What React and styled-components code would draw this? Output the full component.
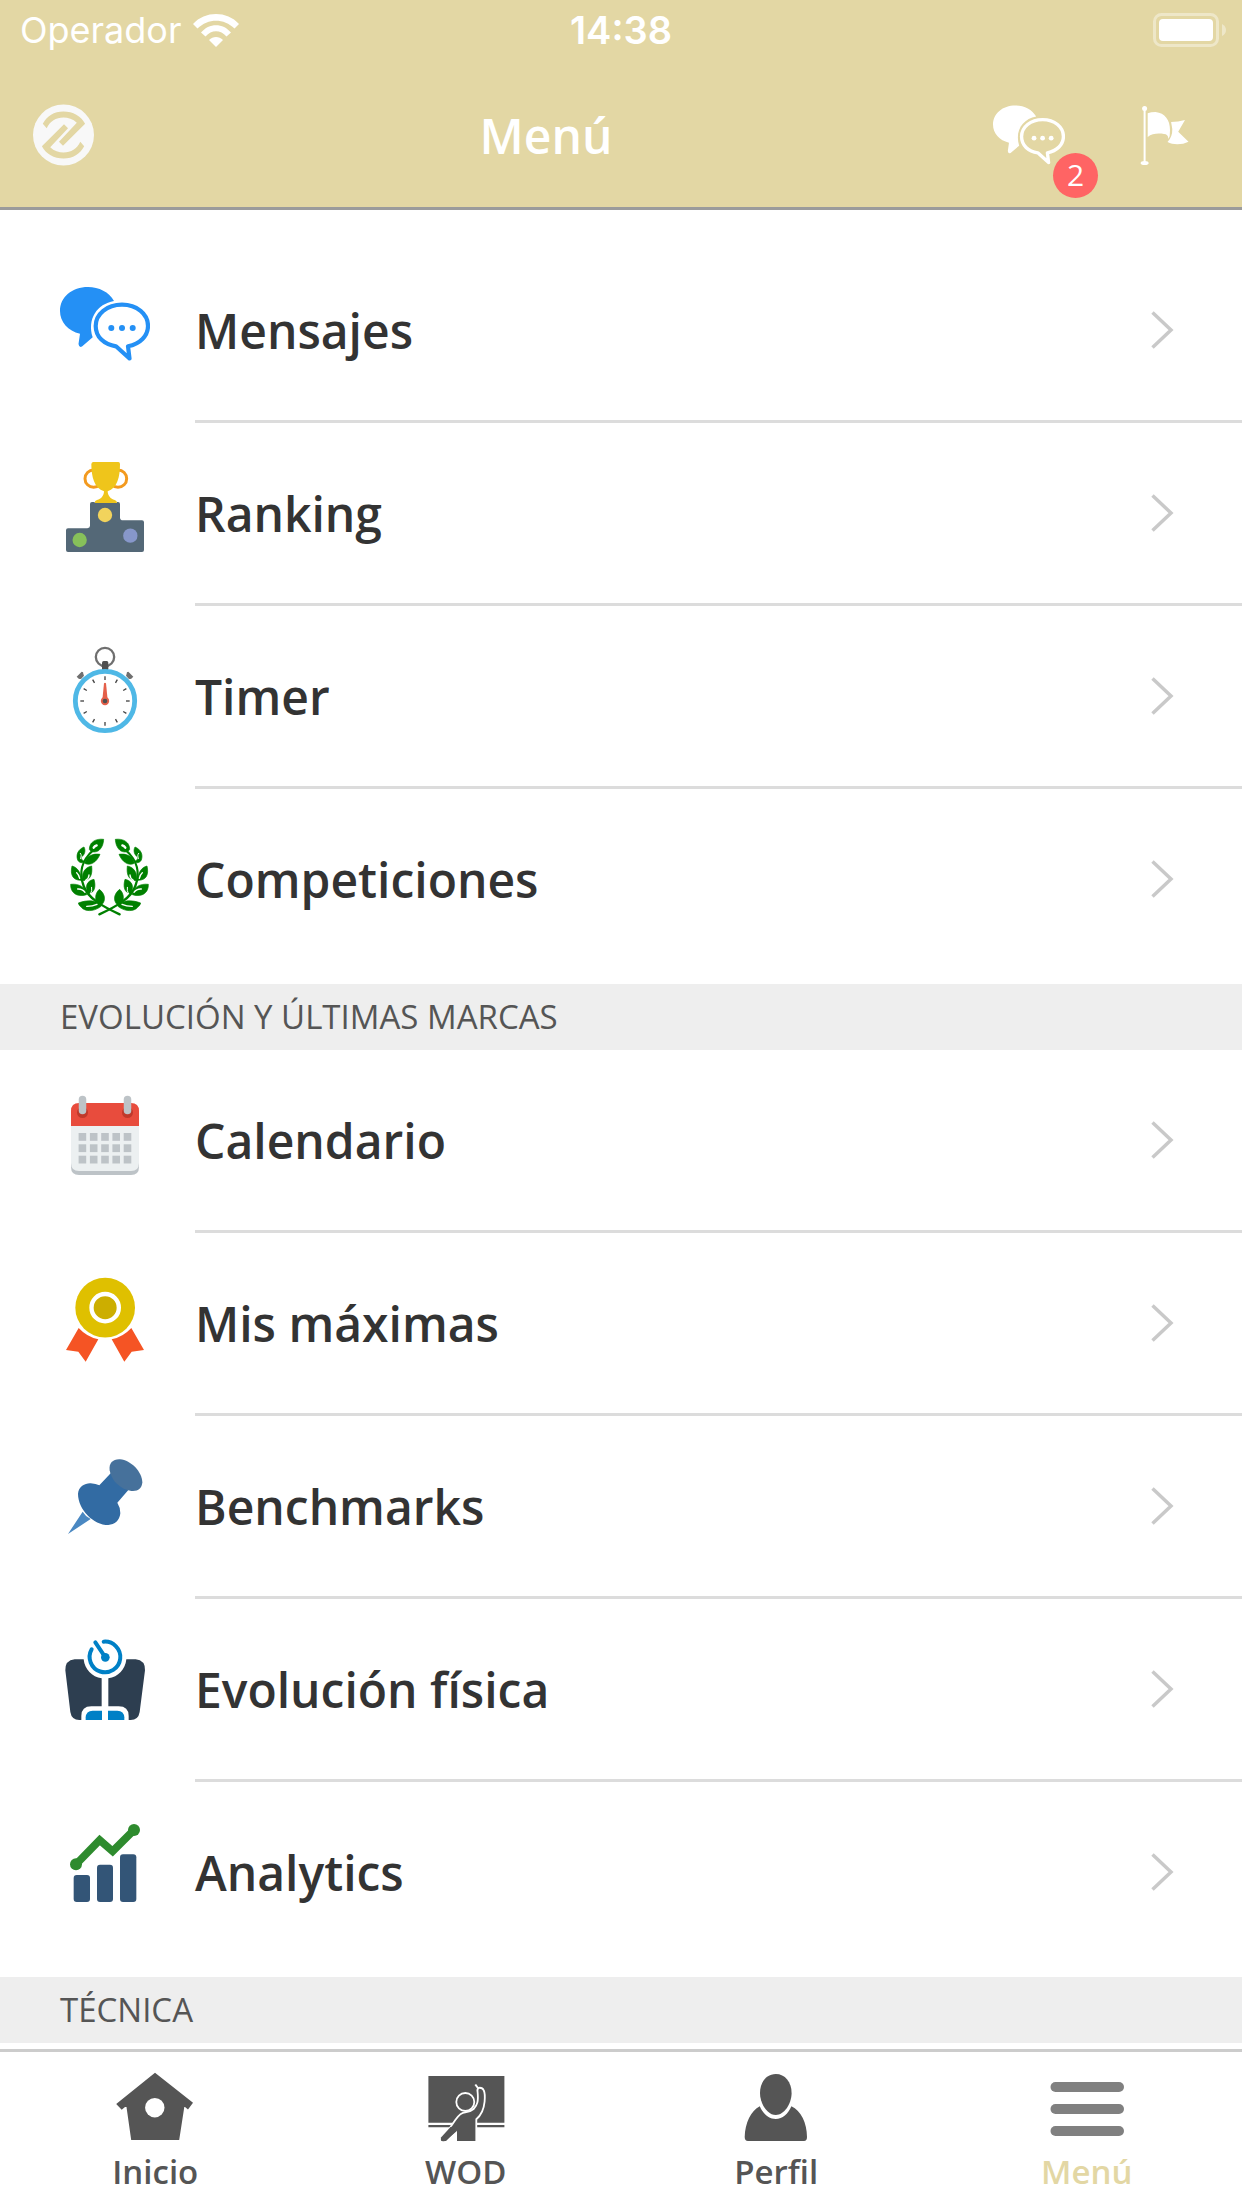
import React from 'react';
import styled, { createGlobalStyle } from 'styled-components';

const GlobalStyle = createGlobalStyle`
  * {
    box-sizing: border-box;
  }

  body {
    margin: 0;
    background: #fff;
    color: #333;
    font-family: "Open Sans", "Noto Sans", sans-serif;
  }
`;

/* ---------- icons ---------- */

const WifiIcon = () => (
  <svg width="46" height="33" viewBox="0 0 46 33" fill="#fff" aria-hidden="true">
    <path d="M0 10C12-3.300 34-3.300 46 10L41.500 14.500C31 4 15 4 4.500 14.500Z" />
    <path d="M8 18.500C16 8.700 30 8.700 38 18.500L33.500 22.500C27.500 15.500 18.500 15.500 12.500 22.500Z" />
    <path d="M16 26C20 22 26 22 30 26L23 33Z" />
  </svg>
);

const BatteryIcon = () => (
  <svg width="74" height="34" viewBox="0 0 74 34" aria-hidden="true">
    <rect x="1.500" y="1.500" width="63" height="31" rx="7" fill="none" stroke="#fff" strokeOpacity="0.4" strokeWidth="3" />
    <rect x="6" y="6" width="54" height="22" rx="4" fill="#fff" />
    <path d="M69 11q4 2 4 6t-4 6z" fill="#fff" fillOpacity="0.4" />
  </svg>
);

const LOGO_HOOK =
  'M9.800 19.800C14 12 21 7.500 30.400 7.500C40 7.500 48 12 52.100 19.800L30 41.800L26 37.800L43.800 18.800C40 15 35 13.500 30.400 13.500C23 13.500 17 17 13.700 24.200Z';

const LogoIcon = () => (
  <svg width="61" height="62" viewBox="0 0 61 62" aria-hidden="true">
    <circle cx="30.500" cy="31" r="30.500" fill="#f8f8f8" />
    <g fill="#e3d7a4">
      <path d={LOGO_HOOK} />
      <path d={LOGO_HOOK} transform="rotate(180 30.500 31)" />
    </g>
  </svg>
);

const ChatIcon = ({ size = 90, color = '#2490f5' }) => (
  <svg width={size} height={size} viewBox="0 0 90 90" fill={color} aria-hidden="true">
    <path d="M54 22C49 13 39 8 28 8C12 8 0 18 0 32C0 43 8 52 20 54.700L18.500 65Q19 69 22 67.500L32.700 58.300C27 40 37 25 54 22Z" />
    <path
      d="M56 67.300C44 65.500 35.700 58 35.700 47C35.700 35 47 25.700 62 25.700S88 35 88 47C88 57 80 65 68 67.300L69.500 79.500Z"
      fill="none"
      stroke={color}
      strokeWidth="4.200"
      strokeLinejoin="round"
    />
    <circle cx="51.300" cy="49" r="3" />
    <circle cx="62" cy="49" r="3" />
    <circle cx="72.700" cy="49" r="3" />
  </svg>
);

const FlagIcon = () => (
  <svg width="60" height="72" viewBox="0 0 60 72" fill="#fff" aria-hidden="true">
    <circle cx="10.600" cy="9.500" r="2.500" />
    <path d="M9.600 10h2v53h-2z" />
    <ellipse cx="10.600" cy="64" rx="4" ry="2" />
    <path d="M13.700 14.300Q17 13 21.600 13C31 14 36 21 36 31L35.700 37L34.500 40Q34 35 30 35C24 34 18 34.500 13.700 38Z" />
    <path d="M37.100 23Q44 23 51 21L44.200 32.700L54.500 42.700C48 46 39 46 33.500 43Q38.500 38 38.300 30Z" />
  </svg>
);

const PodiumIcon = () => (
  <svg width="90" height="90" viewBox="60 606 270 270" aria-hidden="true">
    <g fill="none" stroke="#f39a1f" strokeWidth="9">
      <circle cx="161" cy="656" r="26" />
      <circle cx="234" cy="656" r="26" />
    </g>
    <path d="M167 630L227 630L216 686L178 686Z" fill="#fff" />
    <path
      d="M160 606H235Q240 606 240 612C240 650 232 685 203 694C203 706 212 718 224 720Q231 722 231 729H164Q164 722 171 720C184 718 192 706 192 694C163 685 154 650 154 612Q155 606 160 606Z"
      fill="#efc51b"
    />
    <path
      d="M150 732Q150 726 156 726H164V729H231V726H234Q240 726 240 732V773Q241 781 249 781H306Q312 781 312 787V870Q312 876 306 876H84Q78 876 78 870V811Q78 805 84 805H142Q150 804 150 797Z"
      fill="#546877"
    />
    <circle cx="195" cy="765" r="21.500" fill="#f2d35c" />
    <circle cx="119" cy="840" r="21.500" fill="#87c05a" />
    <circle cx="271" cy="827" r="21.500" fill="#8797ca" />
  </svg>
);

const TimerIcon = () => (
  <svg width="90" height="90" viewBox="60 75 270 270" aria-hidden="true">
    <circle cx="195" cy="111" r="27.500" fill="none" stroke="#6f6f6f" strokeWidth="7" />
    <rect x="186" y="123" width="19" height="28" rx="5" fill="#4f4f4f" />
    <g fill="#6f6f6f">
      <path d="M110 170L125 155Q131 155 130 161L132 167L124 176Q116 178 114 174Z" />
      <path d="M280 170L265 155Q259 155 260 161L258 167L266 176Q274 178 276 174Z" />
    </g>
    <circle cx="195" cy="243" r="89" fill="#fff" stroke="#4fb8e6" strokeWidth="14.500" />
    <g stroke="#444" strokeWidth="4">
      {[0, 30, 60, 90, 120, 150, 180, 210, 240, 270, 300, 330].map((angle) => (
        <path key={angle} d="M195 169V180" transform={`rotate(${angle} 195 243)`} />
      ))}
    </g>
    <path d="M192 190Q195 186 198 190L203 240H187Z" fill="#e4604a" />
    <circle cx="195" cy="243" r="12.500" fill="#e4604a" />
    <circle cx="195" cy="243" r="7" fill="#4f4f4f" />
  </svg>
);

const LaurelBranch = ({ transform }) => (
  <g transform={transform}>
    <g fill="#008000" stroke="#008000" strokeWidth="2" strokeLinejoin="round">
      <path d="M191 658C168 655 148 666 148 688C152 698 168 698 177 691C188 681 190 669 191 658Z" />
      <path d="M132 681C115 688 107 703 113 720C118 730 129 730 134 724C127 722 122 717 124 711C134 705 138 692 132 681Z" />
      <path d="M180 703C160 700 140 706 134 730C152 739 171 725 180 703Z" />
      <path d="M96 738C90 764 98 781 123 781C124 760 113 742 96 738Z" />
      <path d="M155 738C134 742 124 760 128 782C151 781 158 765 155 738Z" />
      <path d="M92 793C91 818 110 833 140 824C137 801 116 790 92 793Z" />
      <path d="M162 778C141 782 133 800 145 821C165 818 168 799 162 778Z" />
      <path d="M115 849C118 860 124 860 128 866C145 877 168 871 183 859C172 839 141 839 115 849Z" />
      <path d="M178 808C164 821 162 843 179 859C198 848 199 824 178 808Z" />
    </g>
    <g fill="none" strokeLinecap="round">
      <path d="M160 690C125 722 115 755 131 798C143 833 184 858 239 883" stroke="#008000" strokeWidth="7" />
      <path d="M161 683Q164 678 170 676" stroke="#fff" strokeWidth="7" />
      <path d="M122 716C124 707 125 706 121 700" stroke="#fff" strokeWidth="3" />
      <path d="M110 758Q117 764 119 775" stroke="#fff" strokeWidth="4" />
      <path d="M137 781Q147 775 147 765" stroke="#fff" strokeWidth="4" />
      <path d="M113 807Q127 806 135 817" stroke="#fff" strokeWidth="4" />
      <path d="M152 821Q157 812 155 802" stroke="#fff" strokeWidth="3" />
      <path d="M140 859Q158 859 171 853" stroke="#fff" strokeWidth="4" />
    </g>
  </g>
);

const LaurelIcon = () => (
  <svg width="90" height="90" viewBox="60 624 270 270" aria-hidden="true">
    <LaurelBranch />
    <LaurelBranch transform="translate(417 0) scale(-1 1)" />
  </svg>
);

const CalendarIcon = () => (
  <svg width="90" height="90" viewBox="0 0 90 90" aria-hidden="true">
    <path d="M11 70H79V78Q79 86 71 86H19Q11 86 11 78Z" fill="#bdc3c7" />
    <path d="M11 36H79V74Q79 82 71 82H19Q11 82 11 74Z" fill="#ecf0f1" />
    <path d="M11 37V22Q11 14 19 14H71Q79 14 79 22V37Z" fill="#e84c3d" />
    {[22.5, 67.5].map((x) => (
      <g key={x}>
        <circle cx={x} cy="23.500" r="5.500" fill="#c0392b" />
        <rect x={x - 3.75} y="6.700" width="7.500" height="18.600" rx="3.750" fill="#bdc3c7" />
      </g>
    ))}
    {[44, 55.3, 66.7].map((y) =>
      [18.6, 29.9, 41.2, 52.4, 63.7].map((x) => (
        <rect key={`${x}-${y}`} x={x} y={y} width="7.600" height="7.800" fill="#bdc3c7" />
      ))
    )}
  </svg>
);

const MedalIcon = () => (
  <svg width="90" height="90" viewBox="60 66 270 270" aria-hidden="true">
    <path d="M116 234Q141 261 175 268L137 335L115 305L78 300Z" fill="#f55424" />
    <path d="M274 234Q249 261 215 268L253 335L275 305L312 300Z" fill="#f55424" />
    <circle cx="195.500" cy="173" r="89.500" fill="#dfc000" />
    <circle cx="195.500" cy="173" r="41" fill="#ccae00" stroke="#fff" strokeWidth="13" />
  </svg>
);

const PinIcon = () => (
  <svg width="90" height="90" viewBox="60 615 270 270" aria-hidden="true">
    <path d="M128 785Q136 799 152 807L84 852Z" fill="#4a88c2" />
    <path
      d="M114 731C116 709 136 699 152 700Q168 701 178 706L212 670L265 720L232 758Q242 774 241 790C239 812 224 824 205 825C160 825 114 778 114 731Z"
      fill="#326ba3"
    />
    <path d="M209 661C206 639 219 627 240 628C273 631 306 665 307 697C306 716 293 725 274 723C242 719 214 693 209 661Z" fill="#46719b" />
  </svg>
);

const ScaleIcon = () => (
  <svg width="90" height="90" viewBox="60 84 270 270" aria-hidden="true">
    <path
      d="M104 148H131C134 178 156 201 185 205V289H154Q124 289 124 318V330H118Q95 330 91 306L76 181Q75 151 104 148Z"
      fill="#2d3e50"
    />
    <path
      d="M287 148H259C256 178 235 201 205 205V289H236Q266 289 266 318V330H272Q295 330 299 306L315 181Q316 151 287 148Z"
      fill="#2d3e50"
    />
    <path d="M137 330V322Q138 303 158 302H186V330Z" fill="#0080c6" />
    <path d="M253 330V322Q252 303 232 302H204V330Z" fill="#0080c6" />
    <g fill="none" stroke="#0080c6" strokeWidth="12" strokeLinecap="round">
      <path d="M191 95A46 46 0 1 1 155 118" />
      <path d="M166 97L196 142" />
    </g>
    <circle cx="196" cy="142" r="13" fill="#0080c6" />
  </svg>
);

const AnalyticsIcon = () => (
  <svg width="90" height="90" viewBox="60 633 270 270" aria-hidden="true">
    <g fill="#335577">
      <rect x="101" y="795" width="49" height="81" rx="9" />
      <rect x="171" y="764" width="48" height="112" rx="9" />
      <rect x="240" y="733" width="49" height="143" rx="9" />
    </g>
    <g fill="#2e8b2e">
      <circle cx="108" cy="763" r="18" />
      <circle cx="282" cy="660" r="18" />
    </g>
    <path d="M108 763L179 690L218 724L282 660" fill="none" stroke="#2e8b2e" strokeWidth="23" />
  </svg>
);

const ChevronIcon = () => (
  <svg width="24" height="40" viewBox="0 0 24 40" aria-hidden="true">
    <path d="M2.500 2.500L21 20L2.500 37.500" fill="none" stroke="#c9c9c9" strokeWidth="3.500" />
  </svg>
);

const HouseIcon = () => (
  <svg width="78" height="78" viewBox="0 0 78 78" aria-hidden="true">
    <path
      d="M39 4.700L77 34.700L72 41.500L69 39H68.300L63.200 72H15.200L10.500 39H9L5.700 41.700L0.200 36Z"
      fill="#555"
    />
    <circle cx="38.800" cy="39.700" r="9.700" fill="#fff" />
  </svg>
);

const BoardIcon = () => (
  <svg width="78" height="78" viewBox="0 0 78 78" aria-hidden="true">
    <path d="M1.400 8h76v46.700h-76zM1.400 57h76v2.300h-76z" fill="#555" />
    <path
      d="M38.300 44.300C34 44.300 31 48 28.300 52L22.500 60.500L13.600 70V74H49.300V51.300C54 47.500 57 40 57.600 33.700C58 29 58 25 56.800 22.500Q55.500 19.500 52 19.800Q49.800 21 50.600 24C51.500 33 50.500 37 46.600 41Q43 44 38.300 44.300Z"
      fill="#555"
      stroke="#fff"
      strokeWidth="1.800"
    />
    <path d="M48.300 16.500L51.300 20.500" stroke="#fff" strokeWidth="2" />
    <path d="M0 60H24L13 71V78H0ZM18 74L30 62V78H16ZM49.300 60H78V78H49.300ZM10 73.700H60V78H10Z" fill="#fff" />
    <path d="M23.500 59L14 69.500Q13 74.500 18 73L29.900 63V58Z" fill="#555" />
    <circle cx="38.300" cy="34" r="9" fill="#555" stroke="#fff" strokeWidth="1.800" />
  </svg>
);

const PersonIcon = () => (
  <svg width="78" height="78" viewBox="0 0 78 78" fill="#555" aria-hidden="true">
    <path d="M38.800 6C48 6 54.600 14 54.600 25C54.600 36 47 47 38.800 47S23 36 23 25C23 14 29.600 6 38.800 6Z" />
    <path d="M22.800 38.300C26 46 32 51 38.800 51S51 46 54.400 38.300C64 43 70 55 70 69Q70 73 67 73H11Q7.700 73 7.700 69C8 55 14 43 22.800 38.300Z" />
  </svg>
);

const BarsIcon = () => (
  <svg width="78" height="78" viewBox="0 0 78 78" fill="#808080" aria-hidden="true">
    <rect x="2.500" y="14" width="73.500" height="10" rx="5" />
    <rect x="2.500" y="36" width="73.500" height="10" rx="5" />
    <rect x="2.500" y="58" width="73.500" height="10" rx="5" />
  </svg>
);

/* ---------- layout ---------- */

const Screen = styled.div`
  display: flex;
  flex-direction: column;
  height: 100vh;
  min-height: 600px;
`;

const Header = styled.header`
  flex: none;
  background: #e3d7a4;
  color: #fff;
  border-bottom: 3px solid #9b9b9b;
`;

const StatusBar = styled.div`
  display: grid;
  grid-template-columns: 1fr auto 1fr;
  align-items: center;
  height: 63px;
  padding: 0 15px 3px;
  font-family: Inter, "Liberation Sans", sans-serif;
  font-size: 36px;
  line-height: 42px;
`;

const Carrier = styled.div`
  display: flex;
  align-items: center;
  gap: 11px;
  padding-left: 5px;
`;

const Clock = styled.time`
  font-size: 38px;
  font-weight: 600;
`;

const Battery = styled.div`
  display: flex;
  justify-content: flex-end;
`;

const TitleBar = styled.div`
  display: flex;
  align-items: center;
  height: 144px;
`;

const IconButton = styled.button`
  position: relative;
  display: flex;
  padding: 0;
  border: 0;
  background: none;
  color: inherit;
  cursor: pointer;
`;

const LogoSlot = styled.div`
  width: 126px;
  padding-left: 33px;
`;

const Title = styled.h1`
  flex: 1;
  margin: 0;
  padding-top: 2px;
  text-align: center;
  font-size: 48px;
  line-height: 66px;
  font-weight: 600;
`;

const Actions = styled.div`
  display: flex;
  align-items: center;
  gap: 69px;
  padding: 0 48px 0 27px;
`;

const Badge = styled.span`
  position: absolute;
  top: 54px;
  left: 60px;
  width: 45px;
  height: 45px;
  border-radius: 50%;
  background: #ff6464;
  font-family: "Open Sans", "Noto Sans", sans-serif;
  font-size: 30px;
  line-height: 44px;
  font-weight: 500;
  text-align: center;
`;

const Content = styled.main`
  flex: 1;
  min-height: 0;
  overflow: hidden;
  padding-top: 30px;
`;

const SectionTitle = styled.h2`
  margin: 0;
  padding: 0 60px;
  background: #eee;
  color: #555;
  font-size: 33px;
  line-height: 66px;
  font-weight: 400;
  text-transform: uppercase;
`;

const List = styled.ul`
  margin: 0;
  padding: 0 0 12px;
  list-style: none;
`;

const RowBody = styled.span`
  display: flex;
  flex: 1;
  align-items: center;
  justify-content: space-between;
  height: 183px;
  padding-right: 68px;
  border-bottom: 3px solid #dcdcdc;
`;

const RowLink = styled.a`
  display: flex;
  gap: 45px;
  padding-left: 60px;
  color: inherit;
  text-decoration: none;

  li:last-child & ${RowBody} {
    border-bottom-color: transparent;
  }
`;

const RowIcon = styled.span`
  display: flex;
  align-items: flex-start;
  padding-top: 39px;
`;

const RowLabel = styled.span`
  padding-top: 2px;
  font-size: 48px;
  line-height: 66px;
  font-weight: 600;
`;

const TabBar = styled.nav`
  display: grid;
  grid-template-columns: repeat(4, 1fr);
  flex: none;
  height: 159px;
  border-top: 3px solid #ccc;
  background: #fff;
`;

const Tab = styled.a`
  display: flex;
  flex-direction: column;
  align-items: center;
  padding-top: 16px;
  color: ${(props) => (props.$active ? '#e3d7a4' : '#555')};
  font-size: 33px;
  line-height: 52px;
  font-weight: 600;
  text-decoration: none;
`;

const sections = [
  {
    items: [
      { label: 'Mensajes', icon: ChatIcon },
      { label: 'Ranking', icon: PodiumIcon },
      { label: 'Timer', icon: TimerIcon },
      { label: 'Competiciones', icon: LaurelIcon },
    ],
  },
  {
    title: 'Evolución y últimas marcas',
    items: [
      { label: 'Calendario', icon: CalendarIcon },
      { label: 'Mis máximas', icon: MedalIcon },
      { label: 'Benchmarks', icon: PinIcon },
      { label: 'Evolución física', icon: ScaleIcon },
      { label: 'Analytics', icon: AnalyticsIcon },
    ],
  },
  { title: 'Técnica', items: [] },
];

const tabs = [
  { label: 'Inicio', icon: HouseIcon },
  { label: 'WOD', icon: BoardIcon },
  { label: 'Perfil', icon: PersonIcon },
  { label: 'Menú', icon: BarsIcon, active: true },
];

const MenuRow = ({ label, icon: Icon }) => (
  <li>
    <RowLink href="#">
      <RowIcon>
        <Icon />
      </RowIcon>
      <RowBody>
        <RowLabel>{label}</RowLabel>
        <ChevronIcon />
      </RowBody>
    </RowLink>
  </li>
);

const App = () => {
  return (
    <Screen>
      <GlobalStyle />
      <Header>
        <StatusBar>
          <Carrier>
            <span>Operador</span>
            <WifiIcon />
          </Carrier>
          <Clock>14:38</Clock>
          <Battery>
            <BatteryIcon />
          </Battery>
        </StatusBar>
        <TitleBar>
          <LogoSlot>
            <IconButton type="button" aria-label="Inicio">
              <LogoIcon />
            </IconButton>
          </LogoSlot>
          <Title>Menú</Title>
          <Actions>
            <IconButton type="button" aria-label="Mensajes">
              <ChatIcon size={72} color="#fff" />
              <Badge>2</Badge>
            </IconButton>
            <IconButton type="button" aria-label="Avisos">
              <FlagIcon />
            </IconButton>
          </Actions>
        </TitleBar>
      </Header>
      <Content>
        {sections.map((section, index) => (
          <section key={index}>
            {section.title && <SectionTitle>{section.title}</SectionTitle>}
            {section.items.length > 0 && (
              <List>
                {section.items.map((item) => (
                  <MenuRow key={item.label} {...item} />
                ))}
              </List>
            )}
          </section>
        ))}
      </Content>
      <TabBar>
        {tabs.map(({ label, icon: Icon, active }) => (
          <Tab key={label} href="#" $active={active} aria-current={active ? 'page' : undefined}>
            <Icon />
            {label}
          </Tab>
        ))}
      </TabBar>
    </Screen>
  );
};

export default App;
